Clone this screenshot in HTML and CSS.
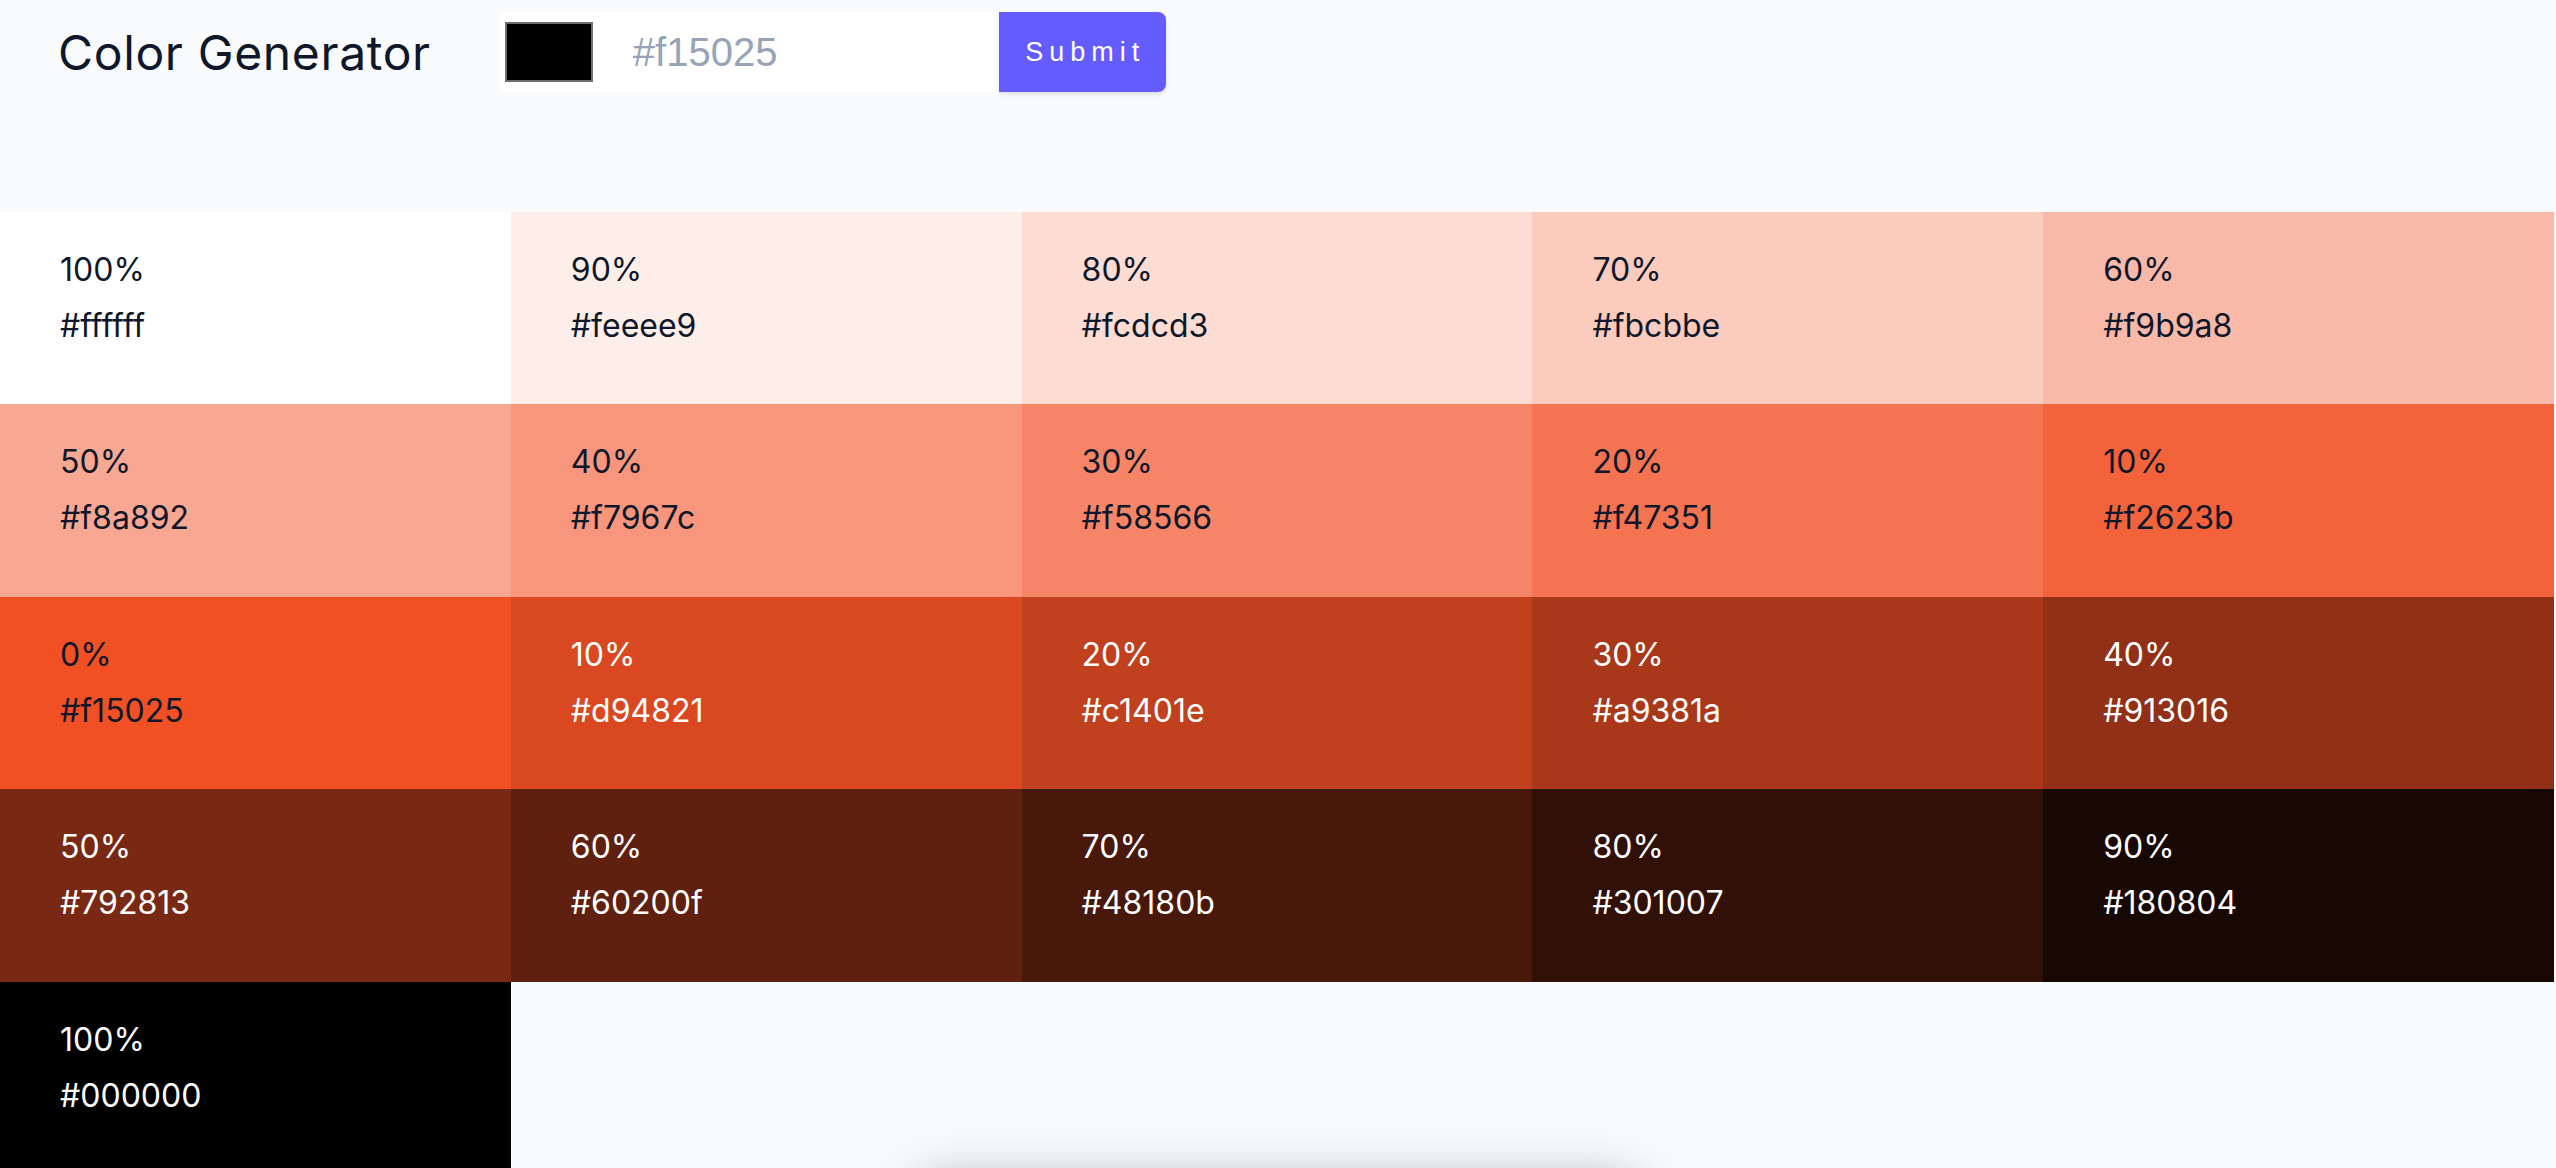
FILE: index.html
```html
<!DOCTYPE html>
<html lang="en">
<head>
<meta charset="utf-8">
<title>Color Generator</title>
<link rel="stylesheet" href="styles.css">
</head>
<body>
<section class="header">
  <h1 class="title">Color Generator</h1>
  <form class="form">
    <div class="field">
      <span class="swatch"></span>
      <input class="hex-input" type="text" placeholder="#f15025">
    </div>
    <button class="btn" type="button">Submit</button>
  </form>
</section>
<section class="colors">
  <article class="tile" style="background:#ffffff"><p class="pct">100%</p><p class="hex">#ffffff</p></article>
  <article class="tile" style="background:#feeee9"><p class="pct">90%</p><p class="hex">#feeee9</p></article>
  <article class="tile" style="background:#fcdcd3"><p class="pct">80%</p><p class="hex">#fcdcd3</p></article>
  <article class="tile" style="background:#fbcbbe"><p class="pct">70%</p><p class="hex">#fbcbbe</p></article>
  <article class="tile" style="background:#f9b9a8"><p class="pct">60%</p><p class="hex">#f9b9a8</p></article>
  <article class="tile" style="background:#f8a892"><p class="pct">50%</p><p class="hex">#f8a892</p></article>
  <article class="tile" style="background:#f7967c"><p class="pct">40%</p><p class="hex">#f7967c</p></article>
  <article class="tile" style="background:#f58566"><p class="pct">30%</p><p class="hex">#f58566</p></article>
  <article class="tile" style="background:#f47351"><p class="pct">20%</p><p class="hex">#f47351</p></article>
  <article class="tile" style="background:#f2623b"><p class="pct">10%</p><p class="hex">#f2623b</p></article>
  <article class="tile" style="background:#f15025"><p class="pct">0%</p><p class="hex">#f15025</p></article>
  <article class="tile light" style="background:#d94821"><p class="pct">10%</p><p class="hex">#d94821</p></article>
  <article class="tile light" style="background:#c1401e"><p class="pct">20%</p><p class="hex">#c1401e</p></article>
  <article class="tile light" style="background:#a9381a"><p class="pct">30%</p><p class="hex">#a9381a</p></article>
  <article class="tile light" style="background:#913016"><p class="pct">40%</p><p class="hex">#913016</p></article>
  <article class="tile light" style="background:#792813"><p class="pct">50%</p><p class="hex">#792813</p></article>
  <article class="tile light" style="background:#60200f"><p class="pct">60%</p><p class="hex">#60200f</p></article>
  <article class="tile light" style="background:#48180b"><p class="pct">70%</p><p class="hex">#48180b</p></article>
  <article class="tile light" style="background:#301007"><p class="pct">80%</p><p class="hex">#301007</p></article>
  <article class="tile light" style="background:#180804"><p class="pct">90%</p><p class="hex">#180804</p></article>
  <article class="tile light" style="background:#000000"><p class="pct">100%</p><p class="hex">#000000</p></article>
</section>
<div class="toast"></div>
</body>
</html>
```

FILE: styles.css
```css
* { box-sizing: border-box; }
html, body {
  margin: 0;
  padding: 0;
  background: #f8fafc;
  font-family: Inter, "Noto Sans", sans-serif;
  color: #0f172a;
  overflow: hidden;
}
.header {
  display: flex;
  align-items: center;
  padding: 12px 0 120px 58px;
}
.title {
  margin: 0 68px 0 0;
  font-size: 48px;
  font-weight: 400;
  line-height: 58px;
  letter-spacing: 0.65px;
  padding-top: 2px;
  color: #0f172a;
}
.form {
  display: flex;
  height: 80px;
}
.field {
  display: flex;
  align-items: center;
  width: 500px;
  background: #ffffff;
  padding-left: 6px;
}
.swatch {
  width: 88px;
  height: 60px;
  background: #000;
  border: 2px solid #6e6e6e;
  flex: none;
}
.hex-input {
  flex: 1;
  min-width: 0;
  height: 80px;
  border: none;
  outline: none;
  background: transparent;
  padding: 0 0 0 40px;
  font-family: "Liberation Sans", Arial, sans-serif;
  font-size: 40px;
  color: #0f172a;
}
.hex-input::placeholder { color: #97a3b6; }
.btn {
  width: 167px;
  height: 80px;
  border: none;
  background: #645cff;
  color: #fff;
  border-radius: 0 8px 8px 0;
  box-shadow: 0 2px 4px rgba(15, 23, 42, 0.12);
  font-family: "Liberation Sans", Arial, sans-serif;
  font-size: 27px;
  letter-spacing: 6px;
  padding: 0 0 0 6px;
}
.colors {
  display: grid;
  width: 2554px;
  grid-template-columns: repeat(5, 1fr);
  grid-auto-rows: 192.4px;
}
.tile {
  padding: 34px 60px 0;
  color: #0f172a;
}
.tile.light { color: #ffffff; }
.pct, .hex {
  margin: 0;
  font-size: 32px;
  line-height: 48px;
}
.hex { margin-top: 8px; }
.toast {
  position: fixed;
  left: 50%;
  top: calc(100% + 12px);
  width: 740px;
  height: 120px;
  margin-left: -370px;
  border-radius: 40px;
  background: #f8fafc;
  box-shadow: 0 0 50px rgba(0, 0, 0, 0.3);
}
```
